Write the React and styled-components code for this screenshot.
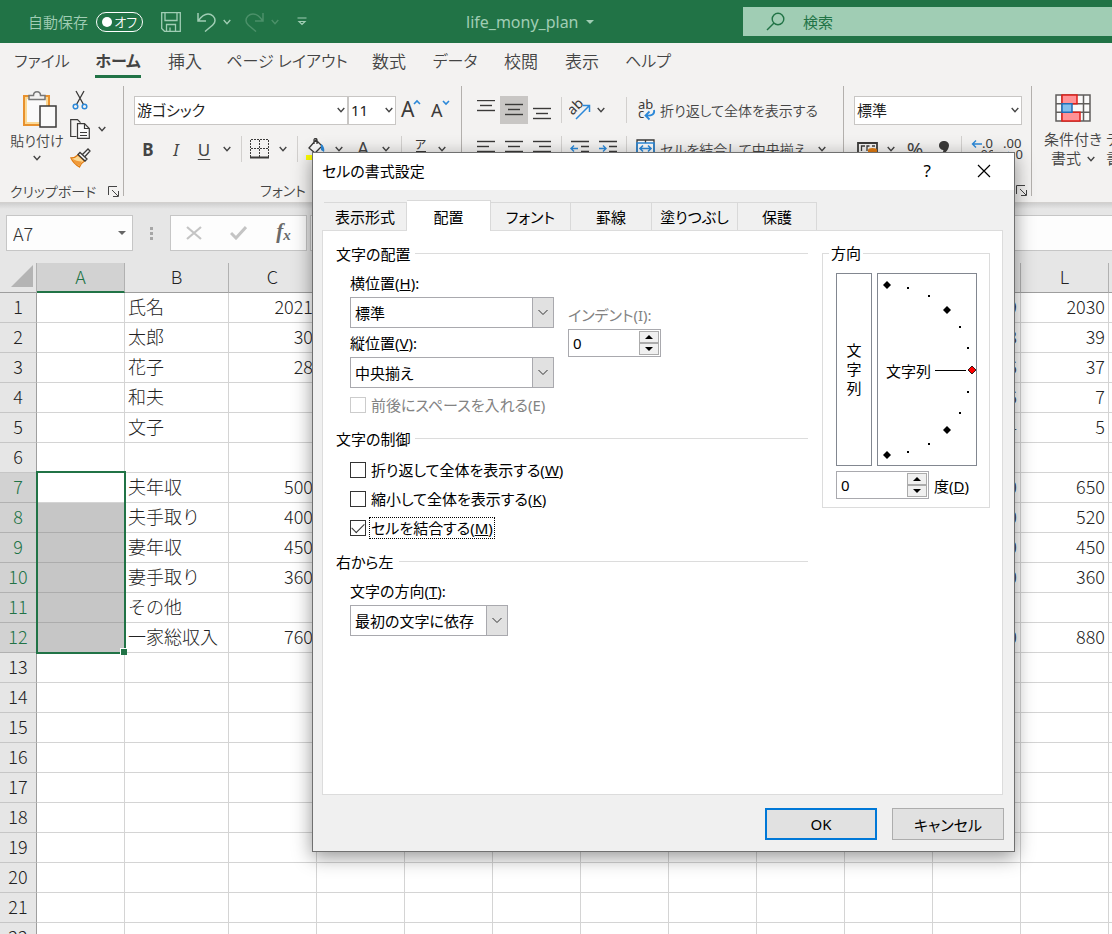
import React from "react";
import styled, { createGlobalStyle, css } from "styled-components";

const ui = '"Noto Sans", "Noto Sans CJK JP", sans-serif';
const sheetFont = '"Noto Sans CJK JP", sans-serif';
const green = "#217346";

const GlobalStyle = createGlobalStyle`
  * { box-sizing: border-box; }
  body { margin: 0; overflow: hidden; background: #fff; font-family: ${ui}; font-size: 15px; font-weight: 400; color: #444; }
  button, input, select { font: inherit; color: inherit; font-feature-settings: inherit; }
  button { padding: 0; border: 0; background: none; white-space: nowrap; }
  svg text { font-weight: 400; }
`;

const Page = styled.div`
  position: relative;
  height: 100vh;
  display: flex;
  flex-direction: column;
  overflow: hidden;
  font-feature-settings: "palt";
`;

/* ---------- title bar ---------- */
const TitleBar = styled.header`
  flex: none;
  height: 43px;
  display: flex;
  align-items: center;
  background: ${green};
  color: #a0cdb4;
  padding-left: 28px;
`;
const AutoSave = styled.label`
  display: flex;
  align-items: center;
  gap: 8px;
  height: 40px;
  width: 133px;
  font-weight: 350;
`;
const Toggle = styled.button`
  width: 47px;
  height: 20px;
  border: 1px solid #fff;
  border-radius: 10px;
  display: flex;
  align-items: center;
  justify-content: space-between;
  padding: 0 5px;
  color: #fff;
  font-size: 13px;
  line-height: 18px;
  &::before { content: ""; width: 10px; height: 10px; border-radius: 50%; background: #fff; }
`;
const QuickButton = styled.button`
  display: flex;
  align-items: center;
  gap: 6px;
  margin-right: ${(p) => p.$gap || 14}px;
  color: ${(p) => (p.$dim ? "#4b9069" : "#a0cdb4")};
`;
const FileName = styled.button`
  display: flex;
  align-items: center;
  gap: 7px;
  margin-left: 158px;
  width: 277px;
  font-size: 16px;
  line-height: 40px;
  height: 42px;
  color: #a0cdb4;
`;
const Search = styled.label`
  flex: 1;
  height: 29px;
  display: flex;
  align-items: center;
  gap: 18px;
  padding-left: 23px;
  background: #a0cdb4;
  color: ${green};
  input {
    flex: 1;
    min-width: 0;
    border: 0;
    outline: 0;
    padding: 0;
    background: none;
    &::placeholder { color: ${green}; opacity: 1; }
  }
`;

/* ---------- ribbon ---------- */
const TabBar = styled.nav`
  flex: none;
  height: 37px;
  display: flex;
  padding-left: 2px;
  background: #f3f2f1;
  font-weight: 350;
`;
const RibbonTab = styled.button`
  width: ${(p) => p.$w}px;
  height: 35px;
  font-size: ${(p) => (p.$small ? 16 : 17)}px;
  line-height: 37px;
  display: flex;
  justify-content: center;
  color: #444;
  ${(p) =>
    p.$active &&
    css`
      font-weight: 700;
      span { border-bottom: 3px solid ${green}; height: 35px; }
    `}
`;
const Ribbon = styled.section`
  flex: none;
  height: 123px;
  display: flex;
  background: #f3f2f1;
  border-bottom: 1px solid #d2d0ce;
  overflow: hidden;
  font-weight: 350;
`;
const Group = styled.div`
  flex: none;
  width: ${(p) => p.$w}px;
  padding: 16px 0 0 ${(p) => p.$pad}px;
  display: flex;
  flex-direction: column;
  gap: 11px;
`;
const GroupDivider = styled.i`
  flex: none;
  width: 1px;
  margin: 6px 0;
  background: #b3b0ad;
`;
const Row = styled.div`
  display: flex;
  align-items: center;
  height: 28px;
`;
const GroupLabel = styled.div`
  display: flex;
  align-items: center;
  height: 20px;
  margin: 6px 0 0 -10px;
  padding-right: 4px;
  font-size: 14px;
  span { flex: 1; text-align: center; padding-right: 4px; }
  button { display: flex; }
`;
const Tool = styled.button`
  display: flex;
  align-items: center;
  justify-content: center;
  width: ${(p) => p.$w || 28}px;
  height: 28px;
  background: ${(p) => (p.$on ? "#c8c6c4" : "none")};
  font-size: ${(p) => p.$size || 17}px;
  font-weight: ${(p) => (p.$bold ? 700 : 400)};
  font-style: ${(p) => (p.$italic ? "italic" : "normal")};
  text-decoration: ${(p) => (p.$under ? "underline" : "none")};
  text-underline-offset: 3px;
`;
const TextTool = styled.button`
  display: flex;
  align-items: center;
  gap: 4px;
  height: 28px;
  font-size: 14px;
`;
const Sep = styled.i`
  width: 1px;
  height: 26px;
  background: #d2d0ce;
  margin: 0 ${(p) => p.$r || 7}px 0 ${(p) => p.$l || 7}px;
`;
const Combo = styled.span`
  flex: none;
  display: grid;
  width: ${(p) => p.$w}px;
  height: ${(p) => p.$h || 29}px;
  font-weight: 400;
  select {
    grid-area: 1 / 1;
    appearance: none;
    width: 100%;
    border: 1px solid #c8c6c4;
    border-radius: 0;
    background: #fff;
    color: #222;
    opacity: 1;
    padding: 0 2px;
  }
  svg { grid-area: 1 / 1; place-self: center end; margin-right: 3px; pointer-events: none; color: #444; }
`;
const Clipboard = styled.div`
  display: flex;
  height: 74px;
  margin-top: -6px;
`;
const PasteButton = styled.button`
  width: 50px;
  height: 78px;
  display: flex;
  flex-direction: column;
  align-items: center;
  font-size: 14px;
  line-height: 20px;
  gap: 4px;
  span { margin-top: -2px; }
`;
const SmallTools = styled.div`
  display: flex;
  flex-direction: column;
  gap: 9px;
  margin-left: 8px;
`;
const SmallTool = styled.button`
  display: flex;
  align-items: center;
  height: 20px;
  gap: 7px;
`;
const Styles = styled.div`
  display: flex;
  gap: 4px;
  padding: 14px 0 0 12px;
`;
const StyleButton = styled.button`
  flex: none;
  display: flex;
  flex-direction: column;
  align-items: ${(p) => (p.$start ? "flex-start" : "center")};
  min-width: 56px;
  line-height: 19px;
  > svg { margin-bottom: 8px; }
`;
const Inline = styled.span`
  display: flex;
  align-items: center;
  gap: 6px;
`;

/* ---------- formula bar ---------- */
const FormulaBar = styled.section`
  flex: none;
  height: 60px;
  display: flex;
  padding: 12px 0 12px 6px;
  background: linear-gradient(#cfcfcf, #e6e6e6 6px);
`;
const NameBox = styled.label`
  width: 127px;
  height: 36px;
  display: flex;
  align-items: center;
  border: 1px solid #c6c6c6;
  background: #fdfdfd;
  padding: 0 6px;
  color: #666;
  input {
    flex: 1;
    min-width: 0;
    border: 0;
    padding: 0;
    outline: 0;
    background: none;
    font-family: ${sheetFont};
    font-size: 18px;
    font-weight: 300;
    color: #333;
  }
`;
const Grip = styled.span`
  width: 37px;
  display: flex;
  flex-direction: column;
  align-items: center;
  justify-content: center;
  gap: 2px;
  i { width: 3px; height: 3px; background: #a6a6a6; }
`;
const FormulaButtons = styled.div`
  width: 137px;
  height: 36px;
  display: flex;
  align-items: center;
  justify-content: space-around;
  border: 1px solid #c6c6c6;
  background: #fdfdfd;
  button { display: flex; width: 45px; justify-content: center; }
  em { font: italic 700 21px/30px "Liberation Serif", serif; color: #6a6a6a; }
  sub { font-size: 15px; vertical-align: -2px; }
`;
const FormulaInput = styled.input`
  flex: 1;
  height: 36px;
  margin-left: 3px;
  border: 1px solid #c6c6c6;
  border-right: 0;
  background: #fdfdfd;
`;

/* ---------- sheet ---------- */
const SheetArea = styled.main`
  flex: 1;
  min-height: 0;
  overflow: hidden;
`;
const Sheet = styled.table`
  table-layout: fixed;
  width: ${(p) => p.$w}px;
  border-spacing: 0;
  font-family: ${sheetFont};
  font-feature-settings: normal;
  font-size: 18px;
  line-height: 26px;
  color: #222;
  th, td { height: 30px; padding: 0 3px 3px; font-weight: 300; white-space: nowrap; overflow: hidden; }
  th { background: #e6e6e6; }
`;
const Corner = styled.th`
  border-right: 1px solid #b1b1b1;
  border-bottom: 1px solid #9e9e9e;
  svg { display: block; margin-left: 8px; }
`;
const ColHead = styled.th`
  border-right: 1px solid #b1b1b1;
  border-bottom: 1px solid #9e9e9e;
  ${(p) => p.$on && css`&& { background: #d2d2d2; color: ${green}; border-bottom: 2px solid ${green}; padding-bottom: 2px; }`}
`;
const RowHead = styled.th`
  border-right: 1px solid #9e9e9e;
  border-bottom: 1px solid #c6c6c6;
  ${(p) => p.$on && css`&& { background: #d2d2d2; color: ${green}; border-bottom-color: #b1b1b1; }`}
`;
const Cell = styled.td`
  border-right: 1px solid #d4d4d4;
  border-bottom: 1px solid ${(p) => (p.$fill ? "#acacac" : "#d4d4d4")};
  background: ${(p) => (p.$fill ? "#c6c6c6" : "#fff")};
  text-align: ${(p) => (p.$num ? "right" : "left")};
  ${(p) => p.$anchor && css`&& { position: relative; overflow: visible; }`}
`;
const Selection = styled.span`
  position: absolute;
  left: -1px;
  top: -2px;
  width: calc(100% + 3px);
  height: calc(600% + 9px);
  border: 2px solid ${green};
  &::after {
    content: "";
    position: absolute;
    right: -3px;
    bottom: -3px;
    width: 6px;
    height: 6px;
    background: ${green};
    border: 1px solid #fff;
    border-width: 1px 0 0 1px;
  }
`;

/* ---------- dialog ---------- */
const Dialog = styled.section`
  position: absolute;
  left: 312px;
  top: 152px;
  width: 703px;
  border: 1px solid #707070;
  background: #f0f0f0;
  color: #000;
  box-shadow: 0 5px 18px rgba(0, 0, 0, 0.42);
`;
const DialogTitle = styled.header`
  height: 37px;
  display: flex;
  align-items: center;
  padding: 0 23px 2px 9px;
  background: #fff;
  h2 { flex: 1; margin: 0; font-size: 15px; line-height: 20px; font-weight: inherit; }
  button { display: flex; margin-left: 46px; font-size: 17px; }
`;
const DialogBody = styled.div`
  padding: 10px 10px 11px 9px;
`;
const DialogTabs = styled.div`
  display: flex;
  align-items: flex-end;
  height: 30px;
  padding-left: 2px;
`;
const DialogTab = styled.button`
  width: ${(p) => p.$w}px;
  height: 28px;
  border: solid #d9d9d9;
  border-width: 1px 1px 0 0;
  ${(p) =>
    p.$active &&
    css`
      height: 31px;
      margin-bottom: -1px;
      background: #fff;
      z-index: 1;
      position: relative;
    `}
`;
const Panel = styled.div`
  min-height: 565px;
  display: flex;
  gap: 14px;
  margin-right: 1px;
  padding: 12px 12px 0 13px;
  border: 1px solid #dcdcdc;
  background: #fff;
`;
const Settings = styled.div`
  flex: 1;
  min-width: 0;
`;
const Heading = styled.h3`
  display: flex;
  align-items: center;
  gap: 5px;
  height: 20px;
  margin: 0;
  font-size: 15px;
  font-weight: inherit;
  &::after { content: ""; flex: 1; border-top: 1px solid #dcdcdc; }
`;
const Block = styled.div`
  padding: ${(p) => p.$top}px 0 ${(p) => p.$bottom}px 14px;
  display: flex;
  flex-direction: column;
  gap: ${(p) => p.$gap}px;
`;
const Pair = styled.div`
  display: flex;
  align-items: center;
  gap: 14px;
`;
const Stack = styled.div`
  display: flex;
  flex-direction: column;
  gap: 5px;
`;
const Field = styled.label`
  display: flex;
  flex-direction: column;
  gap: 4px;
  line-height: 20px;
  color: ${(p) => (p.$off ? "#838383" : "#000")};
`;
const DialogCombo = styled(Combo)`
  select { border: 1px solid #a9a9ae; padding: 0 4px; color: #000; line-height: 20px; }
  svg { margin: 0; }
`;
const Check = styled.label`
  display: flex;
  align-items: center;
  gap: 3px;
  height: ${(p) => p.$h || 24}px;
  color: ${(p) => (p.$off ? "#838383" : "#000")};
  input {
    appearance: none;
    width: 16px;
    height: 16px;
    margin: 0;
    border: 1px solid ${(p) => (p.$off ? "#ccc" : "#333")};
    background: #fff;
    display: grid;
    place-items: center;
  }
  input:checked::before {
    content: "";
    width: 11px;
    height: 6px;
    margin-top: -3px;
    border: solid #333;
    border-width: 0 0 1px 1px;
    transform: rotate(-45deg);
  }
  span {
    line-height: 20px;
    padding: 0 1px;
    border: 1px ${(p) => (p.$focus ? "dotted #000" : "solid transparent")};
  }
`;
const SpinBox = styled.span`
  width: 93px;
  height: 28px;
  display: flex;
  border: 1px solid #a9a9ae;
  background: #fff;
  color: #000;
  input { flex: 1; min-width: 0; border: 0; outline: 0; padding: 0 4px; background: none; color: #000; }
`;
const SpinButtons = styled.span`
  width: 21px;
  display: flex;
  flex-direction: column;
  padding: 1px 1px 1px 0;
  button {
    flex: 1;
    display: grid;
    place-items: center;
    border: 1px solid #ababab;
    background: #f0f0f0;
  }
`;
const Orientation = styled.fieldset`
  align-self: flex-start;
  width: 168px;
  margin: 0;
  padding: 10px 12px 8px 13px;
  border: 1px solid #dcdcdc;
  legend { margin-left: -7px; padding: 0 2px; height: 20px; line-height: 20px; }
`;
const DialRow = styled.div`
  display: flex;
  gap: 5px;
  height: 193px;
  margin-bottom: 5px;
`;
const VerticalText = styled.button`
  width: 36px;
  border: 1px solid #828790;
  display: flex;
  flex-direction: column;
  align-items: center;
  justify-content: center;
  line-height: 19px;
`;
const Dial = styled.button`
  flex: 1;
  display: grid;
  border: 1px solid #828790;
  > * { grid-area: 1 / 1; }
  span { place-self: center start; padding-left: 8px; margin-top: 2px; }
`;
const Degrees = styled.label`
  display: flex;
  align-items: center;
  gap: 5px;
`;
const Footer = styled.footer`
  display: flex;
  justify-content: flex-end;
  gap: 15px;
  padding-top: 13px;
`;
const DialogButton = styled.button`
  width: 112px;
  height: 32px;
  background: #e1e1e1;
  border: ${(p) => (p.$primary ? "2px solid #0078d7" : "1px solid #adadad")};
`;

/* ---------- drawings ---------- */
const Svg = ({ w, h, children, sw = 1, ...rest }) => (
  <svg width={w} height={h} viewBox={`0 0 ${w} ${h}`} fill="none" stroke="currentColor" strokeWidth={sw} aria-hidden="true" {...rest}>
    {children}
  </svg>
);
const Chevron = ({ sw = 1.4, w = 8 }) => (
  <Svg w={w} h={6} sw={sw}><path d={`M.7 1 L${w / 2} ${w / 2 + 0.6} L${w - 0.7} 1`} /></Svg>
);
const Triangle = ({ up, w = 8 }) => (
  <svg width={w} height="4" viewBox="0 0 8 4" aria-hidden="true">
    <path d={up ? "M0 4L4 0L8 4Z" : "M0 0L4 4L8 0Z"} fill="currentColor" />
  </svg>
);
const Launcher = () => (
  <button aria-label="詳細">
    <Svg w={11} h={11}><path d="M.5 9V.5H9M4 4l6 6M10.500 5v5.500H5" /></Svg>
  </button>
);
const Lines = ({ rows }) => (
  <Svg w={20} h={20} sw={1.4} stroke="#3b3a39">
    {rows.map(([x, y, l], i) => <path key={i} d={`M${x} ${y + 0.5}h${l}`} />)}
  </Svg>
);
const DropIcon = () => (
  <Svg w={22} h={31}>
    <rect x=".5" y=".5" width="21" height="30" fill="#e1e1e1" stroke="#a9a9ae" />
    <path d="M6.500 13l4.500 4.500 4.500-4.500" stroke="#333" />
  </Svg>
);
const PasteIcon = () => (
  <Svg w={42} h={39} sw={1.5}>
    <g transform="translate(6 0)">
      <path d="M2 6h25v29H2z" fill="#fbd995" stroke="#e8912d" strokeWidth="2" />
      <path d="M5 9h19v23H5z" fill="#fafafa" stroke="none" />
      <path d="M7 9.500v-4h4.500c0-5 7-5 7 0H23v4z" fill="#f3f2f1" stroke="#777" />
      <path d="M18 16h16v21H18z" fill="#fafafa" stroke="#3b3a39" />
    </g>
  </Svg>
);
const ScissorsIcon = () => (
  <Svg w={20} h={20} sw={1.3}>
    <path d="M6 1l7.500 13.500M14 1L6.500 14.500" stroke="#3b3a39" />
    <circle cx="5.500" cy="16.500" r="2.300" stroke="#2b88d8" strokeWidth="1.500" />
    <circle cx="14.500" cy="16.500" r="2.300" stroke="#2b88d8" strokeWidth="1.500" />
  </Svg>
);
const CopyIcon = () => (
  <Svg w={21} h={20} sw={1.2} stroke="#3b3a39">
    <path d="M6.500 17.500H.7V.7h6.800l3 3" />
    <path d="M7.500 4.700h7l4.800 4.800v9.800H7.500z" fill="#fafafa" />
    <path d="M14.500 4.700v4.800h4.800M10 13.500h7M10 16.500h7" />
  </Svg>
);
const BrushIcon = () => (
  <Svg w={21} h={20} sw={1.3}>
    <path d="M1 10c3 0 5-1 7-3l6.500 6c-2 1-3.500 3-5 6C6 17 3 14.500 1 10z" fill="#fbd995" stroke="#e07a10" />
    <path d="M2 10.500c3 2 6 3 10 3l-2.500 4.500C6 16.500 4 14 2 10.500z" fill="#f09a3a" stroke="none" />
    <path d="M8 6.500l2-2 7 6.500-2 2zM12.500 6.500L18 1l2 2-5 5.500" fill="#fafafa" stroke="#3b3a39" />
  </Svg>
);
const BordersIcon = () => (
  <Svg w={20} h={20}>
    <path d="M.5 1v17M9.500 1v17M18.500 1v17M1 .5h18M1 9.500h18" stroke="#3b3a39" strokeDasharray="2 1" />
    <path d="M0 18.500h19" stroke="#3b3a39" strokeWidth="2" />
  </Svg>
);
const FillIcon = () => (
  <Svg w={20} h={22} sw={1.3}>
    <path d="M3 10l7-8 6 6-7 7zM8 6V2c0-2 3-2 3 0v4" fill="#fafafa" stroke="#3b3a39" />
    <path d="M15 6c2 1 4 4 3 8l-3-2z" fill="#2b88d8" stroke="none" />
    <path d="M0 17h17v5H0z" fill="#ffff00" stroke="none" />
  </Svg>
);
const FontSizeIcon = ({ down }) => (
  <svg width="22" height="24" viewBox="0 0 22 24" fill="none" aria-hidden="true">
    <text x={down ? 2 : 1} y="19" fontSize={down ? 18 : 21} fill="#3b3a39">A</text>
    <path d={down ? "M14 3l3 3 3-3" : "M14 6l3-3 3 3"} stroke="#2b88d8" strokeWidth="1.600" />
  </svg>
);
const RubyIcon = () => (
  <svg width="16" height="24" viewBox="0 0 16 24" fill="none" aria-hidden="true">
    <text x="2" y="12" fontSize="12" fill="#3b3a39">ア</text>
    <path d="M3 14.500h10M6 15v4M10 15v4" stroke="#3b3a39" />
  </svg>
);
const OrientIcon = () => (
  <svg width="22" height="22" viewBox="0 0 22 22" fill="none" aria-hidden="true">
    <text x="2" y="15" fontSize="14" fill="#3b3a39" transform="rotate(-45 5 14)">ab</text>
    <path d="M7 20L20 7M14 6.500h6.500V13" stroke="#2b88d8" strokeWidth="1.500" />
  </svg>
);
const WrapIcon = () => (
  <svg width="18" height="22" viewBox="0 0 18 22" fill="none" aria-hidden="true">
    <text x="0" y="10" fontSize="13" fill="#3b3a39">ab</text>
    <text x="0" y="19" fontSize="13" fill="#3b3a39">c</text>
    <path d="M16 11c1 4-2 6-8 5.500M11.500 12.500L7.500 16.500l4 4" stroke="#2b88d8" strokeWidth="1.800" />
  </svg>
);
const MergeIcon = () => (
  <Svg w={20} h={20} sw={1.3}>
    <path d="M1 1h17v17H1z" fill="#fafafa" stroke="#3b3a39" />
    <path d="M9.500 1v3M9.500 15v3" stroke="#3b3a39" />
    <path d="M1 4h17v11H1zM4 9.500h11M7 6.500l-3 3 3 3M12 6.500l3 3-3 3" stroke="#2b88d8" strokeWidth="1.600" />
  </Svg>
);
const IndentIcon = ({ right }) => (
  <Svg w={20} h={20} sw={1.4}>
    <path d="M1 2.500h18M11 7.500h8M11 12.500h8M1 17.500h18" stroke="#3b3a39" />
    <path d={right ? "M1 9.500h7M5 6.500l3 3-3 3" : "M8 9.500H1M4 6.500l-3 3 3 3"} stroke="#2b88d8" />
  </Svg>
);
const CurrencyIcon = () => (
  <Svg w={22} h={20} sw={1.3}>
    <path d="M1 4h19v11H1z" stroke="#3b3a39" strokeWidth="1.800" />
    <path d="M8 7H4.500v5M12.500 7H10v5M15 7h3" stroke="#3b3a39" />
    <ellipse cx="15.500" cy="11" rx="4.500" ry="2" fill="#e07a10" stroke="none" />
    <path d="M11 11h9v6h-9z" fill="#e07a10" stroke="none" />
  </Svg>
);
const DecimalIcon = ({ less }) => (
  <svg width="22" height="24" viewBox="0 0 22 24" fill="none" aria-hidden="true">
    <text x={less ? 2 : 11} y="11" fontSize="13" fill="#3b3a39">{less ? ".00" : ".0"}</text>
    <text x={less ? 11 : 6} y="22" fontSize="13" fill="#3b3a39">{less ? ".0" : ".00"}</text>
    <path d={less ? "M2 18h8M7 15l3 3-3 3" : "M11 7H1.500M5 3.500L1.500 7 5 10.500"} stroke="#2b88d8" strokeWidth="1.400" />
  </svg>
);
const CommaIcon = () => (
  <svg width="12" height="26" viewBox="0 0 12 26" aria-hidden="true">
    <path d="M6 5a4.500 4.500 0 1 0-1 9c1 0 0 3-3 4 6 0 9-5 9-9a4.500 4.500 0 0 0-5-4z" fill="#3b3a39" />
  </svg>
);
const CondIcon = () => (
  <Svg w={36} h={28} sw={1.5}>
    <path d="M1 1h34v26H1zM1 9.700h34M1 18.300h34M7 1v26M28.500 1v26" fill="#fafafa" stroke="#605e5c" />
    <path d="M7 1h15v8.700H7zM7 18.300h18V27H7z" fill="#ff9296" stroke="#e0201b" />
    <path d="M7 9.700h10v8.600H7z" fill="#83beec" stroke="#1e6fb8" />
  </Svg>
);
const small = [[30, 13], [51, 21], [82, 52], [90, 73], [90, 117], [82, 138], [51, 169], [30, 177]];
const big = [[9, 11], [69, 36], [69, 156], [9, 181]];
const DialDots = () => (
  <svg width="98" height="191" viewBox="0 0 98 191" aria-hidden="true">
    {small.map(([x, y]) => <rect key={`${x}-${y}`} x={x - 1} y={y} width="2" height="2" />)}
    {big.map(([x, y]) => <path key={`${x}-${y}`} d={`M${x - 4} ${y}l4-4 4 4-4 4z`} />)}
    <path d="M57 96.500h31" stroke="#000" strokeWidth="1" shapeRendering="crispEdges" />
    <path d="M90 96l4-4 4 4-4 4z" fill="#f00" stroke="#000" strokeWidth=".8" />
  </svg>
);

/* ---------- data ---------- */
const ribbonTabs = [
  ["ファイル", 80, true], ["ホーム", 72, true], ["挿入", 62], ["ページ レイアウト", 142, true], ["数式", 62],
  ["データ", 70, true], ["校閲", 62], ["表示", 60], ["ヘルプ", 72, true],
];
const dialogTabs = [["表示形式", 83], ["配置", 84], ["フォント", 80], ["罫線", 81], ["塗りつぶし", 86], ["保護", 79]];
const columns = "ABCDEFGHIJKLMNOPQR".split("");
const widthOf = (c) => (c === "B" ? 104 : 88);
const tableWidth = 37 + columns.reduce((sum, c) => sum + widthOf(c), 0);
const values = {
  1: { B: "氏名", C: 2021, K: 2029, L: 2030 },
  2: { B: "太郎", C: 30, K: 38, L: 39 },
  3: { B: "花子", C: 28, K: 36, L: 37 },
  4: { B: "和夫", K: 6, L: 7 },
  5: { B: "文子", K: 4, L: 5 },
  7: { B: "夫年収", C: 500, K: 650, L: 650 },
  8: { B: "夫手取り", C: 400, K: 520, L: 520 },
  9: { B: "妻年収", C: 450, K: 450, L: 450 },
  10: { B: "妻手取り", C: 360, K: 360, L: 360 },
  11: { B: "その他" },
  12: { B: "一家総収入", C: 760, K: 880, L: 880 },
};
const rows = Array.from({ length: 40 }, (_, i) => i + 1);

const Spin = ({ disabled }) => (
  <SpinBox>
    <input defaultValue="0" disabled={disabled} />
    <SpinButtons>
      <button aria-label="増やす"><Triangle up /></button>
      <button aria-label="減らす"><Triangle /></button>
    </SpinButtons>
  </SpinBox>
);

function FormatDialog() {
  return (
    <Dialog role="dialog" aria-labelledby="dialog-title">
      <DialogTitle>
        <h2 id="dialog-title">セルの書式設定</h2>
        <button aria-label="ヘルプ">?</button>
        <button aria-label="閉じる"><Svg w={14} h={14} sw={1.2}><path d="M1 1l12 12M13 1L1 13" /></Svg></button>
      </DialogTitle>
      <DialogBody>
        <DialogTabs role="tablist">
          {dialogTabs.map(([t, w]) => (
            <DialogTab key={t} role="tab" $w={w} $active={t === "配置"}>{t}</DialogTab>
          ))}
        </DialogTabs>
        <Panel>
          <Settings>
            <Heading>文字の配置</Heading>
            <Block $top={10} $bottom={13} $gap={7}>
              <Pair>
                <Stack>
                  <Field>
                    <span>横位置(<u>H</u>):</span>
                    <DialogCombo $w={204} $h={31}>
                      <select><option>標準</option></select>
                      <DropIcon />
                    </DialogCombo>
                  </Field>
                  <Field>
                    <span>縦位置(<u>V</u>):</span>
                    <DialogCombo $w={204} $h={31}>
                      <select><option>中央揃え</option></select>
                      <DropIcon />
                    </DialogCombo>
                  </Field>
                </Stack>
                <Field $off>
                  <span>インデント(I):</span>
                  <Spin disabled />
                </Field>
              </Pair>
              <Check $off $h={20}><input type="checkbox" disabled /><span>前後にスペースを入れる(E)</span></Check>
            </Block>
            <Heading>文字の制御</Heading>
            <Block $top={10} $bottom={11} $gap={5}>
              <Check><input type="checkbox" /><span>折り返して全体を表示する(<u>W</u>)</span></Check>
              <Check><input type="checkbox" /><span>縮小して全体を表示する(<u>K</u>)</span></Check>
              <Check $focus><input type="checkbox" defaultChecked /><span>セルを結合する(<u>M</u>)</span></Check>
            </Block>
            <Heading>右から左</Heading>
            <Block $top={10} $bottom={0} $gap={0}>
              <Field>
                <span>文字の方向(<u>T</u>):</span>
                <DialogCombo $w={158} $h={31}>
                  <select><option>最初の文字に依存</option></select>
                  <DropIcon />
                </DialogCombo>
              </Field>
            </Block>
          </Settings>
          <Orientation>
            <legend>方向</legend>
            <DialRow>
              <VerticalText><span>文</span><span>字</span><span>列</span></VerticalText>
              <Dial><DialDots /><span>文字列</span></Dial>
            </DialRow>
            <Degrees><Spin /><span>度(<u>D</u>)</span></Degrees>
          </Orientation>
        </Panel>
        <Footer>
          <DialogButton $primary>OK</DialogButton>
          <DialogButton>キャンセル</DialogButton>
        </Footer>
      </DialogBody>
    </Dialog>
  );
}

export default function App() {
  return (
    <Page>
      <GlobalStyle />
      <TitleBar>
        <AutoSave>自動保存<Toggle aria-label="自動保存">オフ</Toggle></AutoSave>
        <QuickButton aria-label="上書き保存" $gap={16}>
          <Svg w={20} h={20} sw={1.3}><path d="M.7.7h18.600v18.600H3.500L.7 16.500zM4 .7v7.800h12V.7M5.500 19v-6.500h9V19M9 19v-3.500" /></Svg>
        </QuickButton>
        <QuickButton aria-label="元に戻す" $gap={14}>
          <Svg w={20} h={20} sw={1.5}><path d="M1 1v8h8M1.500 8.500C4 5 7 2 11 2c4 0 7 3 7 6.500 0 3-2 4.500-10 11" /></Svg>
          <Chevron />
        </QuickButton>
        <QuickButton aria-label="やり直し" $dim $gap={18}>
          <Svg w={20} h={20} sw={1.5}><path d="M18 1v8h-8M17.500 8.500C15 5 12 2 8 2 4 2 1 5 1 8.500c0 3 2 4.500 10 11" /></Svg>
          <Chevron />
        </QuickButton>
        <QuickButton aria-label="カスタマイズ" $gap={1}>
          <Svg w={10} h={10} sw={1.2}><path d="M.5 1h9M2 4.500l3 3 3-3z" /></Svg>
        </QuickButton>
        <FileName>life_mony_plan<Triangle /></FileName>
        <Search>
          <Svg w={19} h={19} sw={1.4}><circle cx="12" cy="7" r="5.800" /><path d="M8 11L1 18" /></Svg>
          <input placeholder="検索" aria-label="検索" />
        </Search>
      </TitleBar>

      <TabBar>
        {ribbonTabs.map(([t, w, compact]) => (
          <RibbonTab key={t} $w={w} $small={compact} $active={t === "ホーム"}><span>{t}</span></RibbonTab>
        ))}
      </TabBar>

      <Ribbon>
        <Group $w={123} $pad={12}>
          <Clipboard>
            <PasteButton><PasteIcon /><span>貼り付け</span><Chevron /></PasteButton>
            <SmallTools>
              <SmallTool aria-label="切り取り"><ScissorsIcon /></SmallTool>
              <SmallTool aria-label="コピー"><CopyIcon /><Chevron /></SmallTool>
              <SmallTool aria-label="書式のコピー"><BrushIcon /></SmallTool>
            </SmallTools>
          </Clipboard>
          <GroupLabel><span>クリップボード</span><Launcher /></GroupLabel>
        </Group>
        <GroupDivider />
        <Group $w={337} $pad={10}>
          <Row>
            <Combo $w={214}><select aria-label="フォント"><option>游ゴシック</option></select><Chevron /></Combo>
            <Combo $w={48}><select aria-label="フォント サイズ"><option>11</option></select><Chevron /></Combo>
            <Tool aria-label="拡大" $w={30}><FontSizeIcon /></Tool>
            <Tool aria-label="縮小" $w={28}><FontSizeIcon down /></Tool>
          </Row>
          <Row>
            <Tool $bold>B</Tool>
            <Tool $italic>I</Tool>
            <Tool $under>U</Tool>
            <Tool $w={18} aria-label="下線の種類"><Chevron /></Tool>
            <Sep $l={5} $r={4} />
            <Tool aria-label="罫線"><BordersIcon /></Tool>
            <Tool $w={18} aria-label="罫線の種類"><Chevron /></Tool>
            <Sep $l={5} $r={4} />
            <Tool aria-label="塗りつぶしの色"><FillIcon /></Tool>
            <Tool $w={18} aria-label="色の選択"><Chevron /></Tool>
            <Tool $w={30} $size={19}>A</Tool>
            <Tool $w={16} aria-label="文字の色"><Chevron /></Tool>
            <Sep />
            <Tool $w={24} aria-label="ふりがな"><RubyIcon /></Tool>
            <Tool $w={18} aria-label="ふりがなの選択"><Chevron /></Tool>
          </Row>
          <GroupLabel><span>フォント</span><Launcher /></GroupLabel>
        </Group>
        <GroupDivider />
        <Group $w={381} $pad={10}>
          <Row>
            <Tool aria-label="上揃え"><Lines rows={[[1, 0, 18], [4, 5, 12], [1, 10, 18]]} /></Tool>
            <Tool aria-label="上下中央揃え" $on><Lines rows={[[1, 4, 18], [4, 9, 12], [1, 14, 18]]} /></Tool>
            <Tool aria-label="下揃え"><Lines rows={[[1, 8, 18], [4, 13, 12], [1, 18, 18]]} /></Tool>
            <Sep $l={5} $r={4} />
            <Tool aria-label="方向"><OrientIcon /></Tool>
            <Tool $w={14} aria-label="方向の選択"><Chevron /></Tool>
            <Sep $l={18} $r={11} />
            <TextTool><WrapIcon />折り返して全体を表示する</TextTool>
          </Row>
          <Row>
            <Tool aria-label="左揃え"><Lines rows={[[1, 2, 18], [1, 7, 12], [1, 12, 18]]} /></Tool>
            <Tool aria-label="中央揃え"><Lines rows={[[1, 2, 18], [4, 7, 12], [1, 12, 18]]} /></Tool>
            <Tool aria-label="右揃え"><Lines rows={[[1, 2, 18], [7, 7, 12], [1, 12, 18]]} /></Tool>
            <Sep $l={5} $r={4} />
            <Tool aria-label="インデントを減らす"><IndentIcon /></Tool>
            <Tool aria-label="インデントを増やす"><IndentIcon right /></Tool>
            <Sep $l={4} $r={9} />
            <TextTool><MergeIcon />セルを結合して中央揃え</TextTool>
            <Tool $w={32} aria-label="結合の選択"><Chevron /></Tool>
          </Row>
          <GroupLabel><span>配置</span><Launcher /></GroupLabel>
        </Group>
        <GroupDivider />
        <Group $w={187} $pad={10}>
          <Row>
            <Combo $w={168}><select aria-label="表示形式"><option>標準</option></select><Chevron /></Combo>
          </Row>
          <Row>
            <Tool aria-label="通貨"><CurrencyIcon /></Tool>
            <Tool $w={18} aria-label="通貨の選択"><Chevron /></Tool>
            <Tool $w={30} $size={20}>%</Tool>
            <Tool aria-label="桁区切り"><CommaIcon /></Tool>
            <Sep $l={3} $r={4} />
            <Tool $w={32} aria-label="小数点以下の表示桁数を増やす"><DecimalIcon /></Tool>
            <Tool $w={28} aria-label="小数点以下の表示桁数を減らす"><DecimalIcon less /></Tool>
          </Row>
          <GroupLabel><span>数値</span><Launcher /></GroupLabel>
        </Group>
        <GroupDivider />
        <Styles>
          <StyleButton><CondIcon /><span>条件付き</span><Inline>書式<Chevron /></Inline></StyleButton>
          <StyleButton $start>
            <Svg w={36} h={28} />
            <span>テーブルとして</span>
            <Inline>書式設定<Chevron /></Inline>
          </StyleButton>
        </Styles>
      </Ribbon>

      <FormulaBar>
        <NameBox><input defaultValue="A7" aria-label="名前ボックス" /><Triangle /></NameBox>
        <Grip><i /><i /><i /></Grip>
        <FormulaButtons>
          <button aria-label="キャンセル"><Svg w={16} h={14} sw={2.2} stroke="#c4c4c4"><path d="M1 1l14 12M15 1L1 13" /></Svg></button>
          <button aria-label="入力"><Svg w={17} h={14} sw={3} stroke="#c4c4c4"><path d="M1 7l5 5L16 1" /></Svg></button>
          <button aria-label="関数の挿入"><em>f<sub>x</sub></em></button>
        </FormulaButtons>
        <FormulaInput aria-label="数式バー" />
      </FormulaBar>

      <SheetArea>
        <Sheet $w={tableWidth}>
          <colgroup>
            <col width="37" />
            {columns.map((c) => <col key={c} width={widthOf(c)} />)}
          </colgroup>
          <thead>
            <tr>
              <Corner><svg width="22" height="22" viewBox="0 0 22 22" aria-hidden="true"><path d="M22 0v22H0z" fill="#b4b4b4" /></svg></Corner>
              {columns.map((c) => <ColHead key={c} $on={c === "A"}>{c}</ColHead>)}
            </tr>
          </thead>
          <tbody>
            {rows.map((r) => (
              <tr key={r}>
                <RowHead $on={r >= 7 && r <= 12}>{r}</RowHead>
                {columns.map((c) => {
                  const v = values[r]?.[c];
                  return (
                    <Cell
                      key={c}
                      $num={typeof v === "number"}
                      $fill={c === "A" && r >= 8 && r <= 12}
                      $anchor={c === "A" && r === 7}
                    >
                      {v}
                      {c === "A" && r === 7 && <Selection />}
                    </Cell>
                  );
                })}
              </tr>
            ))}
          </tbody>
        </Sheet>
      </SheetArea>

      <FormatDialog />
    </Page>
  );
}
